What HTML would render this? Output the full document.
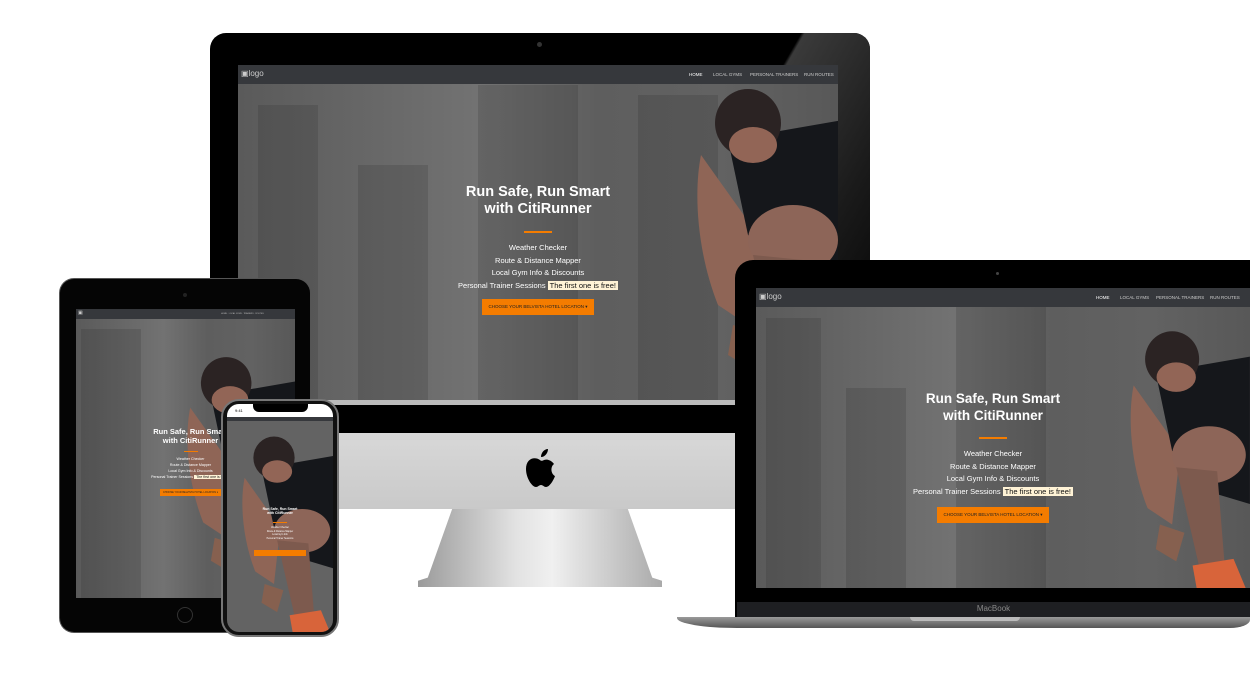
<!DOCTYPE html>
<html><head><meta charset="utf-8"><style>
*{margin:0;padding:0;box-sizing:border-box}
body{width:1250px;height:687px;background:#fff;position:relative;overflow:hidden;font-family:"Liberation Sans",sans-serif}
.abs{position:absolute}
.scr{position:absolute;overflow:hidden;background:linear-gradient(90deg,#5a5a5a 0%,#666 20%,#727272 40%,#5e5e5e 60%,#626262 80%,#585858 100%)}
.scr .b{position:absolute;background:rgba(40,40,40,.18)}
.nav{position:absolute;left:0;top:0;right:0;background:#36383c;color:#ccc;white-space:nowrap}
.hero{position:absolute;text-align:center;color:#fff;left:0;right:0}
.hero h1{font-weight:bold;color:#fff}
.bar{background:#f47c00;margin:0 auto}
.btn{background:#f47c00;color:#222;display:inline-block;white-space:nowrap}
.free{background:#fff3d6;color:#111;padding:0 2px}
svg.man{position:absolute}
</style></head><body>

<svg width="0" height="0" style="position:absolute"><defs>
<g id="man">
<path d="M8 70 C0 110 5 170 25 220 L55 240 L65 150 Z" fill="#8f6556"/>
<path d="M35 55 L150 35 L150 215 L100 200 L55 150 Z" fill="#15171b"/>
<ellipse cx="100" cy="155" rx="45" ry="35" fill="#8d6558"/>
<path d="M60 170 L110 175 L120 300 L90 300 Z" fill="#7d5a4e"/>
<ellipse cx="55" cy="38" rx="33" ry="34" fill="#2b2323"/>
<ellipse cx="60" cy="60" rx="24" ry="18" fill="#926556"/>
<path d="M80 290 L130 282 L145 318 L85 318 Z" fill="#d8643a"/>
<path d="M40 240 L70 250 L60 285 L35 270 Z" fill="#86604f"/>
</g></defs></svg>

<!-- iMac -->
<div class="abs" style="left:210px;top:33px;width:660px;height:375px;background:#000;border-radius:16px 16px 0 0"></div>
<div class="abs" style="left:730px;top:33px;width:140px;height:375px;background:linear-gradient(120deg,transparent 20%,#3a3a3a 21%,#1a1a1a 60%,#000 100%);border-radius:0 16px 0 0"></div>
<div class="abs" style="left:537px;top:42px;width:5px;height:5px;border-radius:50%;background:#333"></div>
<div class="abs" style="left:210px;top:400px;width:660px;height:5px;background:#bbb"></div>
<div class="abs" style="left:210px;top:405px;width:660px;height:28px;background:#000"></div>
<div class="abs" style="left:210px;top:433px;width:660px;height:76px;background:linear-gradient(#d8d8d8,#c9c9c9);border-radius:0 0 14px 14px"></div>
<svg class="abs" style="left:524px;top:448px" width="32" height="40" viewBox="0 0 32 40"><path d="M16 12 C10 8 2 11 2 21 C2 30 8 39 12 39 C14 39 15 37 17 37 C19 37 20 39 22 39 C26 39 30 31 31 28 C27 26 26 19 30 16 C27 12 23 11 20 12 C18 13 17 13 16 12Z M17 9 C17 5 20 1 24 1 C24 5 21 9 17 9Z" fill="#000"/></svg>
<div class="abs" style="left:418px;top:509px;width:244px;height:78px;background:linear-gradient(90deg,#9a9a9a,#e2e2e2 40%,#f0f0f0 55%,#aaa);clip-path:polygon(14% 0,86% 0,96% 88%,100% 92%,100% 100%,0 100%,0 92%,4% 88%)"></div>

<div class="scr" style="left:238px;top:65px;width:600px;height:335px">
  <div class="b" style="left:20px;top:40px;width:60px;height:295px"></div>
  <div class="b" style="left:120px;top:100px;width:70px;height:235px"></div>
  <div class="b" style="left:240px;top:20px;width:100px;height:315px"></div>
  <div class="b" style="left:400px;top:30px;width:80px;height:305px"></div>
  <div class="nav" style="height:19px">
    <span class="abs" style="left:3px;top:4px;font-size:8px">&#9635;logo</span>
    <span class="abs" style="left:451px;top:7px;font-size:4.5px;color:#fff">HOME</span>
    <span class="abs" style="left:475px;top:7px;font-size:4.5px">LOCAL GYMS</span>
    <span class="abs" style="left:512px;top:7px;font-size:4.5px">PERSONAL TRAINERS</span>
    <span class="abs" style="left:566px;top:7px;font-size:4.5px">RUN ROUTES</span>
  </div>
  <svg class="man" style="left:455px;top:20px" width="150" height="320" viewBox="0 0 150 320"><use href="#man"/></svg>
  <div class="hero" style="top:119px">
    <h1 style="font-size:14.5px;line-height:17px">Run Safe, Run Smart<br>with CitiRunner</h1>
    <div class="bar" style="width:28px;height:2px;margin-top:13px"></div>
    <div style="font-size:7.5px;line-height:12.5px;margin-top:9px">Weather Checker<br>Route &amp; Distance Mapper<br>Local Gym Info &amp; Discounts<br>Personal Trainer Sessions <span class="free">The first one is free!</span></div>
    <div class="btn" style="font-size:4.5px;padding:5px 6px;margin-top:7px">CHOOSE YOUR BELVISTA HOTEL LOCATION ▾</div>
  </div>
</div>

<!-- Laptop -->
<div class="abs" style="left:735px;top:260px;width:530px;height:360px;background:#000;border-radius:18px 0 0 0"></div>
<div class="abs" style="left:996px;top:272px;width:3px;height:3px;border-radius:50%;background:#444"></div>
<div class="abs" style="left:737px;top:602px;width:513px;height:16px;background:#1e1f22;color:#888;font-size:8px;text-align:center;line-height:14px">MacBook</div>
<div class="abs" style="left:677px;top:617px;width:573px;height:11px;background:linear-gradient(#9a9a9a,#555);border-radius:0 0 20px 60px/0 0 8px 10px"></div>
<div class="abs" style="left:910px;top:617px;width:110px;height:4px;background:#bbb;border-radius:0 0 4px 4px"></div>
<div class="scr" style="left:756px;top:288px;width:494px;height:300px">
  <div class="b" style="left:10px;top:30px;width:55px;height:270px"></div>
  <div class="b" style="left:90px;top:100px;width:60px;height:200px"></div>
  <div class="b" style="left:200px;top:10px;width:90px;height:290px"></div>
  <div class="nav" style="height:19px">
    <span class="abs" style="left:3px;top:4px;font-size:8px">&#9635;logo</span>
    <span class="abs" style="left:340px;top:7px;font-size:4.5px;color:#fff">HOME</span>
    <span class="abs" style="left:364px;top:7px;font-size:4.5px">LOCAL GYMS</span>
    <span class="abs" style="left:400px;top:7px;font-size:4.5px">PERSONAL TRAINERS</span>
    <span class="abs" style="left:454px;top:7px;font-size:4.5px">RUN ROUTES</span>
  </div>
  <svg class="man" style="left:370px;top:40px" width="125" height="262" viewBox="0 0 150 320"><use href="#man"/></svg>
  <div class="hero" style="top:102px;left:-20px">
    <h1 style="font-size:13.5px;line-height:17px">Run Safe, Run Smart<br>with CitiRunner</h1>
    <div class="bar" style="width:28px;height:2px;margin-top:13px"></div>
    <div style="font-size:7.5px;line-height:12.5px;margin-top:9px">Weather Checker<br>Route &amp; Distance Mapper<br>Local Gym Info &amp; Discounts<br>Personal Trainer Sessions <span class="free">The first one is free!</span></div>
    <div class="btn" style="font-size:4.5px;padding:5px 6px;margin-top:9px">CHOOSE YOUR BELVISTA HOTEL LOCATION ▾</div>
  </div>
</div>

<!-- iPad -->
<div class="abs" style="left:60px;top:279px;width:250px;height:353px;background:#050505;border-radius:14px;box-shadow:0 0 0 1px #555"></div>
<div class="abs" style="left:183px;top:293px;width:4px;height:4px;border-radius:50%;background:#222"></div>
<div class="abs" style="left:177px;top:607px;width:16px;height:16px;border-radius:50%;border:1px solid #333"></div>
<div class="scr" style="left:76px;top:309px;width:219px;height:289px">
  <div class="b" style="left:5px;top:20px;width:60px;height:269px"></div>
  <div class="nav" style="height:10px"><span class="abs" style="left:2px;top:1px;font-size:5px">&#9635;</span><span class="abs" style="left:145px;top:4px;font-size:2px;color:#bbb">HOME · LOCAL GYMS · TRAINERS · ROUTES</span></div>
  <svg class="man" style="left:108px;top:45px" width="115" height="245" viewBox="0 0 150 320"><use href="#man"/></svg>
  <div class="hero" style="top:118px;left:10px">
    <h1 style="font-size:7.5px;line-height:9px">Run Safe, Run Smart<br>with CitiRunner</h1>
    <div class="bar" style="width:14px;height:1px;margin-top:6px"></div>
    <div style="font-size:3.6px;line-height:6px;margin-top:4px">Weather Checker<br>Route &amp; Distance Mapper<br>Local Gym Info &amp; Discounts<br>Personal Trainer Sessions <span class="free">The first one is free!</span></div>
    <div class="btn" style="font-size:2.5px;padding:2px 3px;margin-top:4px">CHOOSE YOUR BELVISTA HOTEL LOCATION ▾</div>
  </div>
</div>

<!-- iPhone -->
<div class="abs" style="left:221px;top:399px;width:118px;height:238px;background:#111;border-radius:18px;border:2px solid #777"></div>
<div class="scr" style="left:227px;top:404px;width:106px;height:228px;border-radius:12px;background:#636363">
  <div class="abs" style="left:0;top:0;width:106px;height:13px;background:#fff;font-size:4px;color:#000;padding:4px 0 0 8px">9:41</div>
  <div class="abs" style="left:26px;top:0;width:55px;height:8px;background:#000;border-radius:0 0 6px 6px"></div>
  <div class="abs" style="left:0;top:13px;width:106px;height:4px;background:#36383c"></div>
  <svg class="man" style="left:12px;top:30px" width="95" height="200" viewBox="0 0 150 320"><use href="#man"/></svg>
  <div class="hero" style="top:103px">
    <div style="font-size:3.5px;font-weight:bold;line-height:4px">Run Safe, Run Smart<br>with CitiRunner</div>
    <div class="bar" style="width:14px;height:1px;margin-top:7px"></div>
    <div style="font-size:2.3px;line-height:3.5px;margin-top:4px">Weather Checker<br>Route &amp; Distance Mapper<br>Local Gym Info<br>Personal Trainer Sessions</div>
    <div class="btn" style="font-size:2px;padding:2px 3px;margin-top:9px;width:52px;height:6px"></div>
  </div>
</div>
</body></html>
